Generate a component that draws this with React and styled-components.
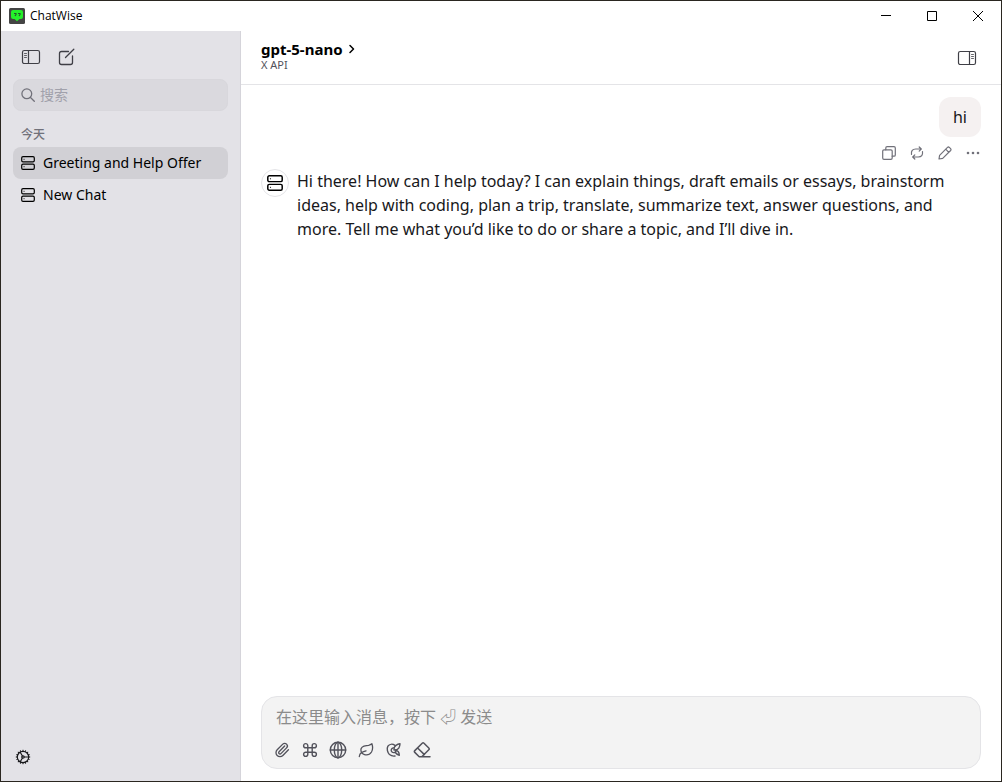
import React, { useState } from 'react'
import styled, { createGlobalStyle } from 'styled-components'
import { Paperclip } from 'lucide-react'

const INK = '#18181b'
const MUTED = '#71717a'
const LINE = '#e4e4e7'
const SIDEBAR = '#e3e2e7'
const SELECTED = '#d1d0d5'
const FRAME = '#2a2620'

const GlobalStyle = createGlobalStyle`
  * {
    box-sizing: border-box;
  }
  body {
    margin: 0;
    color: ${INK};
    font-family: 'Noto Sans', 'Noto Sans CJK SC', 'DejaVu Sans', sans-serif;
  }
  button, input, textarea {
    font: inherit;
    color: inherit;
  }
`

const Window = styled.div`
  display: flex;
  flex-direction: column;
  min-height: 100vh;
  border: 1px solid ${FRAME};
  background: #fff;
`

const TitleBar = styled.header`
  display: flex;
  align-items: center;
  height: 30px;
  padding-left: 8px;
  gap: 5px;
`

const AppName = styled.span`
  flex-grow: 1;
  color: #000;
  font-family: 'Open Sans', sans-serif;
  font-size: 12px;
  line-height: 16px;
`

const WindowButtons = styled.div`
  display: flex;
`

const WindowButton = styled.button`
  display: flex;
  align-items: center;
  justify-content: center;
  width: 46px;
  height: 30px;
  padding: 0;
  border: 0;
  background: none;
  color: #000;
`

const Body = styled.div`
  display: flex;
  flex-grow: 1;
`

const Sidebar = styled.aside`
  display: flex;
  flex-direction: column;
  flex: 0 0 240px;
  min-width: 0;
  padding: 12px;
  border-right: 1px solid #d5d4da;
  background: ${SIDEBAR};
`

const IconButton = styled.button`
  display: flex;
  align-items: center;
  justify-content: center;
  width: ${({ $size }) => $size || 28}px;
  height: ${({ $size }) => $size || 28}px;
  padding: 0;
  border: 0;
  background: none;
  color: ${({ $color }) => $color || '#3f3f46'};
`

const SidebarTools = styled.div`
  display: flex;
  gap: 8px;
  padding-left: 4px;
`

const SidebarFooter = styled.div`
  display: flex;
  padding-bottom: 2px;
`

const SearchBox = styled.label`
  display: flex;
  align-items: center;
  gap: 5px;
  height: 32px;
  margin-top: 8px;
  padding: 0 7px;
  border: 1px solid #d8d7dc;
  border-radius: 8px;
  background: #dad9de;
  color: ${MUTED};
`

const SearchInput = styled.input`
  flex: 1 1 0;
  min-width: 0;
  padding: 0;
  border: 0;
  outline: 0;
  background: none;
  font-size: 14px;
  line-height: 20px;
  &::placeholder {
    color: #a1a1ab;
  }
`

const GroupTitle = styled.h2`
  margin: 16px 0 4px;
  padding-left: 8px;
  color: ${MUTED};
  font-size: 12px;
  font-weight: 500;
  line-height: 16px;
`

const ChatList = styled.nav`
  display: flex;
  flex-direction: column;
  flex-grow: 1;
`

const ChatLink = styled.a`
  display: flex;
  align-items: center;
  gap: 8px;
  padding: 6px 8px;
  border-radius: 8px;
  background: ${({ $active }) => ($active ? SELECTED : 'transparent')};
  color: #000;
  font-size: 14px;
  line-height: 20px;
  text-decoration: none;
`

const Main = styled.main`
  display: flex;
  flex-direction: column;
  flex: 1 1 0;
  min-width: 0;
`

const ChatHeader = styled.div`
  display: flex;
  align-items: center;
  justify-content: space-between;
  height: 54px;
  padding: 0 20px;
  border-bottom: 1px solid ${LINE};
`

const ModelButton = styled.button`
  display: flex;
  flex-direction: column;
  padding: 0 0 4px;
  border: 0;
  background: none;
  text-align: left;
`

const ModelName = styled.span`
  display: flex;
  align-items: center;
  gap: 4px;
  color: #000;
  font-size: 15px;
  font-weight: 700;
  line-height: 18px;
`

const Provider = styled.span`
  color: #52525b;
  font-size: 11px;
  line-height: 14px;
`

const Messages = styled.section`
  display: flex;
  flex-direction: column;
  flex-grow: 1;
  padding: 12px 20px;
`

const Bubble = styled.div`
  align-self: flex-end;
  padding: 8px 14px;
  border-radius: 12px;
  background: #f5f1f1;
  font-size: 16px;
  line-height: 24px;
`

const MessageTools = styled.div`
  display: flex;
  align-self: flex-end;
  gap: 12px;
  padding: 8px 0;
`

const Reply = styled.article`
  display: flex;
  gap: 8px;
`

const Avatar = styled.div`
  display: flex;
  flex: 0 0 28px;
  align-items: center;
  justify-content: center;
  height: 28px;
  border: 1px solid ${LINE};
  border-radius: 50%;
  color: #000;
`

const ReplyText = styled.p`
  margin: 0;
  font-size: 16px;
  line-height: 24px;
`

const Composer = styled.form`
  display: flex;
  flex-direction: column;
  gap: 6px;
  margin: 0 20px 12px;
  padding: 8px 14px 4px;
  border: 1px solid ${LINE};
  border-radius: 16px;
  background: #f3f3f3;
`

const Prompt = styled.textarea`
  height: 25px;
  padding: 0;
  border: 0;
  outline: 0;
  resize: none;
  overflow: hidden;
  background: none;
  font-size: 16px;
  line-height: 24px;
  &::placeholder {
    color: #8b8b8b;
  }
`

const ComposerTools = styled.div`
  display: flex;
  margin-left: -8px;
`

const Icon = ({ size = 16, box = 16, stroke = 1.2, children }) => (
  <svg
    width={size}
    height={size}
    viewBox={`0 0 ${box} ${box}`}
    fill="none"
    stroke="currentColor"
    strokeWidth={stroke}
    strokeLinecap="round"
    strokeLinejoin="round"
    aria-hidden="true"
  >
    {children}
  </svg>
)

const LogoIcon = () => (
  <svg width="16" height="16" viewBox="0 0 16 16" aria-hidden="true">
    <rect width="16" height="16" rx="1.5" fill="#444" />
    <path d="M4 2h8q2 0 2 2v5q0 2-2 2h-1.500L8 13.200 5.500 11H4q-2 0-2-2V4q0-2 2-2z" fill="#24f02a" />
    <path d="M5 5.500h2v1L6 8M9 5.500h2v1L10 8" fill="none" stroke="#23582a" strokeWidth="1.100" />
  </svg>
)

const ServerIcon = ({ size = 14, stroke = 1.2 }) => (
  <Icon size={size} box={14} stroke={stroke}>
    <rect x="0.700" y="0.700" width="12.600" height="5.100" rx="1.300" />
    <rect x="0.700" y="8.200" width="12.600" height="5.100" rx="1.300" />
    <path d="M3 3.300h.1M3 10.700h.1" strokeWidth="1" />
  </Icon>
)

const PanelIcon = ({ right }) => (
  <Icon size={20} box={20} stroke={1.2}>
    <rect x="1.500" y="3.500" width="17" height="13" rx="1.800" />
    {right ? (
      <path d="M12.500 3.500v13" />
    ) : (
      <path d="M7.500 3.500v13" />
    )}
    <path
      d={right ? 'M14.500 6.500h2M14.500 8.500h2M14.500 10.500h2' : 'M3.500 6.500h2M3.500 8.500h2M3.500 10.500h2'}
      strokeWidth="0.800"
    />
  </Icon>
)

const ComposeIcon = () => (
  <Icon size={18} box={18} stroke={1.300}>
    <path d="M10.500 3.500H3.500Q1.500 3.500 1.500 5.500v9q0 2 2 2h9q2 0 2-2V8M7.500 9.500l8.300-8.300" />
  </Icon>
)

const SearchIcon = () => (
  <Icon size={14} box={14} stroke={1.300}>
    <circle cx="5.800" cy="5.800" r="4.900" />
    <path d="M9.500 9.500l3.800 3.800" />
  </Icon>
)

const TEETH = Array.from({ length: 16 }, (_, i) => i * 22.5)

const GearIcon = () => (
  <Icon size={16} stroke={1.200}>
    <circle cx="8" cy="8" r="5.700" />
    <circle cx="8" cy="8" r="1.200" />
    {TEETH.map(angle => (
      <path key={angle} d="M8 1.200v.6" transform={`rotate(${angle} 8 8)`} strokeWidth="1" />
    ))}
    <path d="M9.400 8h4M7.300 6.800L5.200 3.300M7.300 9.200l-2.100 3.500" />
  </Icon>
)

const CopyIcon = () => (
  <Icon size={14} box={14} stroke={1.200}>
    <rect x="0.700" y="3.800" width="9.500" height="9.500" rx="1.300" />
    <path d="M3.800 3.800V2Q3.800.7 5.100.7h6.900q1.300 0 1.300 1.300v6.900q0 1.300-1.300 1.300h-1.800" />
  </Icon>
)

const RefreshIcon = () => (
  <Icon size={14} box={14} stroke={1.200}>
    <path d="M1.500 8.300Q.8 3.200 5.800 3h5.500M9.200 1l2.100 2-2.100 2.100M12.500 5.700q.7 5.100-4.300 5.300H2.700M4.800 8.900L2.700 11l2.100 2" />
  </Icon>
)

const PencilIcon = () => (
  <Icon size={14} box={14} stroke={1.200}>
    <path d="M1 13l.6-3.700 7.900-7.900q.9-.8 1.800 0l1.300 1.300q.8.9 0 1.800L4.700 12.400zM7.700 3.200l3.100 3.100" />
  </Icon>
)

const DotsIcon = () => (
  <Icon size={14} box={14} stroke={0}>
    <g fill="currentColor">
      <circle cx="2" cy="7" r="1.300" />
      <circle cx="7" cy="7" r="1.300" />
      <circle cx="12" cy="7" r="1.300" />
    </g>
  </Icon>
)

const ClipIcon = () => <Paperclip size={16} strokeWidth={2} aria-hidden="true" />

const CommandIcon = () => (
  <Icon size={16} stroke={1.400}>
    <path d="M5.800 5.800V3.700a2.100 2.100 0 1 0-2.100 2.100h8.600a2.100 2.100 0 1 0-2.100-2.100v8.600a2.100 2.100 0 1 0 2.100-2.100H3.700a2.100 2.100 0 1 0 2.100 2.100z" />
  </Icon>
)

const GlobeIcon = () => (
  <Icon size={18} box={18} stroke={1.400}>
    <circle cx="9" cy="9" r="7.700" />
    <ellipse cx="9" cy="9" rx="3.700" ry="7.700" />
    <path d="M1.300 9h15.400M9 1.300v15.400" />
  </Icon>
)

const LeafIcon = () => (
  <Icon size={16} stroke={1.300}>
    <path d="M1.300 14.500q.3-2.800 2.200-4Q5.500 9.600 8 8.800M3.500 10.500Q1.600 5.800 6 4.200q2.700-.8 4.600-.9 2-.3 3.300-1.500 1.600 4.900-.4 8.200-2.600 3.900-7 2.600-2-.6-3-2.100" />
  </Icon>
)

const ToolIcon = () => (
  <Icon size={16} stroke={1.400}>
    <path d="M9 3.300C6.500 1.700 3.400 2 1.900 4.200.5 6.700 1.500 10.500 3.500 12.500q2.500 2 5.500 1.500" />
    <path d="M7.300 5.800Q4.800 6.500 5.300 9q.9 2 3 1.600 1.900-.5 1.700-2.600" />
    <path d="M8 8q-.2-3.300 2-4.700 1.800-1.100 4-1.500-.1 2.700-1.200 4.300Q11.300 8.200 8 8z" />
    <path d="M10 8.500q3 .2 3.300 4.700-2.300-.5-4-2.700" />
  </Icon>
)

const EraserIcon = () => (
  <Icon size={18} box={18} stroke={1.500}>
    <path d="M6.200 15.800L1.800 11.400q-.9-.9 0-1.800l7.400-7.400q.9-.9 1.800 0l4.800 4.800q.9.9 0 1.800l-7 7M4.600 7l6.800 6.600M6.200 15.800H17" />
  </Icon>
)

const chats = [
  { id: 'greeting', title: 'Greeting and Help Offer' },
  { id: 'new', title: 'New Chat' },
]

const messageActions = [
  { label: 'Copy', Glyph: CopyIcon },
  { label: 'Regenerate', Glyph: RefreshIcon },
  { label: 'Edit', Glyph: PencilIcon },
  { label: 'More', Glyph: DotsIcon },
]

const composerActions = [
  { label: 'Attach', Glyph: ClipIcon },
  { label: 'Commands', Glyph: CommandIcon },
  { label: 'Web search', Glyph: GlobeIcon },
  { label: 'Artifacts', Glyph: LeafIcon },
  { label: 'Tools', Glyph: ToolIcon },
  { label: 'Clear', Glyph: EraserIcon },
]

const App = () => {
  const [active, setActive] = useState('greeting')

  return (
    <Window>
      <GlobalStyle />
      <TitleBar>
        <LogoIcon />
        <AppName>ChatWise</AppName>
        <WindowButtons>
          <WindowButton aria-label="Minimize">
            <svg width="10" height="10" stroke="currentColor"><path d="M0 4.500h10" /></svg>
          </WindowButton>
          <WindowButton aria-label="Maximize">
            <svg width="10" height="10" fill="none" stroke="currentColor"><path d="M.5.5h9v9h-9z" /></svg>
          </WindowButton>
          <WindowButton aria-label="Close">
            <svg width="10" height="10" stroke="currentColor"><path d="M0 0l10 10M10 0L0 10" /></svg>
          </WindowButton>
        </WindowButtons>
      </TitleBar>
      <Body>
        <Sidebar>
          <SidebarTools>
            <IconButton aria-label="Toggle sidebar"><PanelIcon /></IconButton>
            <IconButton aria-label="New chat"><ComposeIcon /></IconButton>
          </SidebarTools>
          <SearchBox>
            <SearchIcon />
            <SearchInput type="text" placeholder="搜索" aria-label="搜索" />
          </SearchBox>
          <GroupTitle>今天</GroupTitle>
          <ChatList>
            {chats.map(({ id, title }) => (
              <ChatLink key={id} href={`#${id}`} $active={id === active} onClick={() => setActive(id)}>
                <ServerIcon />
                {title}
              </ChatLink>
            ))}
          </ChatList>
          <SidebarFooter>
            <IconButton $size={20} $color="#18181b" aria-label="Settings"><GearIcon /></IconButton>
          </SidebarFooter>
        </Sidebar>
        <Main>
          <ChatHeader>
            <ModelButton>
              <ModelName>
                gpt-5-nano
                <Icon size={10} box={10} stroke={1.500}><path d="M3 1.500L6.500 5 3 8.500" /></Icon>
              </ModelName>
              <Provider>X API</Provider>
            </ModelButton>
            <IconButton aria-label="Toggle panel"><PanelIcon right /></IconButton>
          </ChatHeader>
          <Messages>
            <Bubble>hi</Bubble>
            <MessageTools>
              {messageActions.map(({ label, Glyph }) => (
                <IconButton key={label} $size={16} $color={MUTED} aria-label={label}><Glyph /></IconButton>
              ))}
            </MessageTools>
            <Reply>
              <Avatar><ServerIcon size={16} stroke={1.300} /></Avatar>
              <ReplyText>
                Hi there! How can I help today? I can explain things, draft emails or essays, brainstorm
                ideas, help with coding, plan a trip, translate, summarize text, answer questions, and
                more. Tell me what you’d like to do or share a topic, and I’ll dive in.
              </ReplyText>
            </Reply>
          </Messages>
          <Composer onSubmit={e => e.preventDefault()}>
            <Prompt rows={1} placeholder="在这里输入消息，按下 ⏎ 发送" aria-label="在这里输入消息" />
            <ComposerTools>
              {composerActions.map(({ label, Glyph }) => (
                <IconButton key={label} type="button" $color="#52525b" aria-label={label}><Glyph /></IconButton>
              ))}
            </ComposerTools>
          </Composer>
        </Main>
      </Body>
    </Window>
  )
}

export default App
